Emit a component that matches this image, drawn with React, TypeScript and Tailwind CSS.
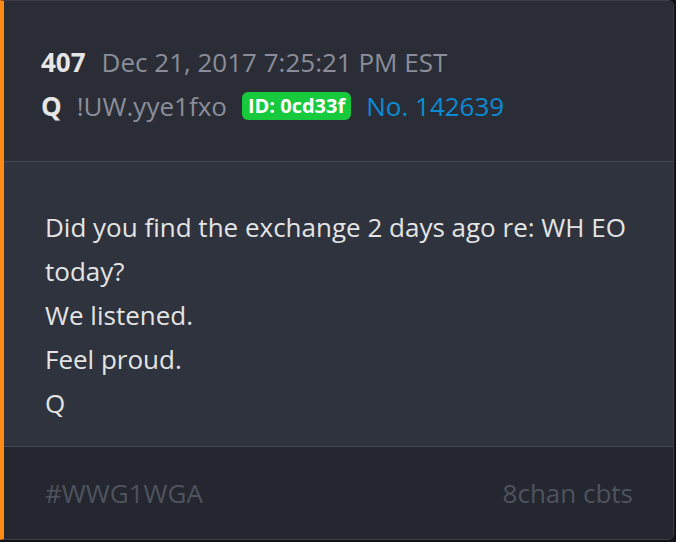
const App = () => {
  return (
    <div className="w-[676px] h-[542px] bg-[#111215]" style={{ fontFamily: '"Open Sans", sans-serif' }}>
      <div className="w-[674px] h-[540px] flex flex-col border border-[#3c3f48] border-l-4 border-l-[#ff8a14] rounded-r-md overflow-hidden">
        {/* Header */}
        <div className="bg-[#2a2d35] pl-[37px] pt-[39px] pb-[33px] text-[26px] leading-[44px]">
          <div className="flex items-center gap-4">
            <span className="font-bold text-[#e6e6e6]">407</span>
            <span className="text-[#8b8e9a]">Dec 21, 2017 7:25:21 PM EST</span>
          </div>
          <div className="flex items-center gap-[15px]">
            <span className="font-bold text-[#e6e6e6]">Q</span>
            <span className="text-[#8b8e9a]">!UW.yye1fxo</span>
            <span className="bg-[#17c93c] text-white font-bold text-[20px] leading-[28px] px-[6px] rounded-md">ID: 0cd33f</span>
            <span className="text-[#0b8bd4]">No. 142639</span>
          </div>
        </div>

        {/* Body */}
        <div className="flex-1 bg-[#2e333d] border-t border-[#454953] pl-[41px] pr-6 pt-[43px] text-[26px] leading-[44px] text-[#e4e4e4]">
          <p>Did you find the exchange 2 days ago re: WH EO today?</p>
          <p>We listened.</p>
          <p>Feel proud.</p>
          <p>Q</p>
        </div>

        {/* Footer */}
        <div className="h-[93px] bg-[#24272f] border-t border-[#454953] pl-[41px] pr-[40px] flex items-center justify-between text-[26px] text-[#4f535e]">
          <span>#WWG1WGA</span>
          <span>8chan cbts</span>
        </div>
      </div>
    </div>
  );
};

export default App;
